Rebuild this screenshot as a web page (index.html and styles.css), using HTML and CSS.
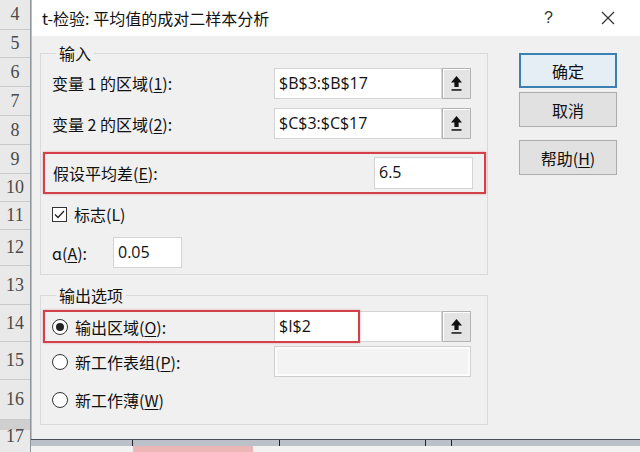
FILE: index.html
```html
<!DOCTYPE html>
<html lang="zh-CN">
<head>
    <meta charset="UTF-8">
    <title>t-检验: 平均值的成对二样本分析</title>
    <link rel="stylesheet" href="styles.css">
</head>
<body>
    <!-- Excel 行号 -->
    <div class="row-heads">
        <div class="rh" style="height:30px">4</div>
        <div class="rh" style="height:28px">5</div>
        <div class="rh" style="height:29px">6</div>
        <div class="rh" style="height:29px">7</div>
        <div class="rh" style="height:29px">8</div>
        <div class="rh" style="height:29px">9</div>
        <div class="rh" style="height:28px">10</div>
        <div class="rh" style="height:28px">11</div>
        <div class="rh" style="height:36px">12</div>
        <div class="rh" style="height:39px">13</div>
        <div class="rh" style="height:37px">14</div>
        <div class="rh" style="height:38px">15</div>
        <div class="rh" style="height:40px">16</div>
        <div class="rh rh-last" style="height:32px">17</div>
    </div>

    <div class="main">
        <div class="dialog">
            <div class="title-bar">
                <span class="title">t-检验: 平均值的成对二样本分析</span>
                <span class="help">?</span>
                <span class="close">
                    <svg width="14" height="14" viewBox="0 0 14 14"><path d="M1 1L13 13M13 1L1 13" stroke="#333" stroke-width="1.2" fill="none"/></svg>
                </span>
            </div>

            <div class="dialog-body">
                <div class="left-col">
                    <fieldset class="group group-in">
                        <legend>输入</legend>

                        <div class="row row-range1">
                            <span class="label">变量 1 的区域(<u>1</u>):</span>
                            <div class="ref-input">
                                <span class="ref-text">$B$3:$B$17</span>
                                <span class="ref-btn">
                                    <svg width="13" height="17" viewBox="0 0 13 17"><path d="M6.5 1L12 7.5H8.6V12H4.4V7.5H1Z" fill="#111"/><rect x="1.5" y="14.2" width="10" height="1.5" fill="#111"/></svg>
                                </span>
                            </div>
                        </div>

                        <div class="row row-range2">
                            <span class="label">变量 2 的区域(<u>2</u>):</span>
                            <div class="ref-input">
                                <span class="ref-text">$C$3:$C$17</span>
                                <span class="ref-btn">
                                    <svg width="13" height="17" viewBox="0 0 13 17"><path d="M6.5 1L12 7.5H8.6V12H4.4V7.5H1Z" fill="#111"/><rect x="1.5" y="14.2" width="10" height="1.5" fill="#111"/></svg>
                                </span>
                            </div>
                        </div>

                        <div class="row mark-row">
                            <span class="label">假设平均差(<u>E</u>):</span>
                            <div class="text-input diff-input">6.5</div>
                        </div>

                        <div class="row check-row">
                            <span class="checkbox">
                                <svg width="13" height="13" viewBox="0 0 13 13"><path d="M2 6.5L5 9.5L11 3" stroke="#222" stroke-width="1.3" fill="none"/></svg>
                            </span>
                            <span class="label">标志(L)</span>
                        </div>

                        <div class="row alpha-row">
                            <span class="label alpha-label">ɑ(<u>A</u>):</span>
                            <div class="text-input alpha-input">0.05</div>
                        </div>
                    </fieldset>

                    <fieldset class="group group-out">
                        <legend>输出选项</legend>

                        <div class="row out-row1">
                            <span class="radio checked"></span>
                            <span class="label out-label">输出区域(<u>O</u>):</span>
                            <div class="ref-input">
                                <span class="ref-text">$I$2</span>
                                <span class="ref-btn">
                                    <svg width="13" height="17" viewBox="0 0 13 17"><path d="M6.5 1L12 7.5H8.6V12H4.4V7.5H1Z" fill="#111"/><rect x="1.5" y="14.2" width="10" height="1.5" fill="#111"/></svg>
                                </span>
                            </div>
                            <div class="mark-box"></div>
                        </div>

                        <div class="row out-row2">
                            <span class="radio"></span>
                            <span class="label out-label">新工作表组(<u>P</u>):</span>
                            <div class="text-input disabled-input"></div>
                        </div>

                        <div class="row out-row3">
                            <span class="radio"></span>
                            <span class="label">新工作薄(<u>W</u>)</span>
                        </div>
                    </fieldset>
                </div>

                <div class="btn-col">
                    <button class="btn btn-default">确定</button>
                    <button class="btn btn-cancel">取消</button>
                    <button class="btn btn-help">帮助(<u>H</u>)</button>
                </div>
            </div>
        </div>

        <!-- 底部工作表标签栏 -->
        <div class="tabs">
            <div class="tab-bar">
                <span class="tick" style="width:101px"></span>
                <span class="tick" style="width:146px"></span>
                <span class="tick" style="width:145px"></span>
                <span class="tick" style="width:25px"></span>
            </div>
            <div class="tab-row">
                <span class="tab-pink"></span>
            </div>
        </div>
    </div>
</body>
</html>
```

FILE: styles.css
```css
body {
    margin: 0;
    width: 640px;
    height: 452px;
    overflow: hidden;
    display: flex;
    font-family: "Noto Sans CJK SC", "Noto Sans", sans-serif;
    font-size: 16px;
    color: #111;
    background-color: #e8e8e8;
}

/* 行号列 */
.row-heads {
    width: 30px;
    flex: none;
    border-right: 1px solid #8f9499;
    background-color: #e9e9e9;
}

.rh {
    box-sizing: border-box;
    display: flex;
    align-items: center;
    justify-content: center;
    border-bottom: 1px solid #c9c9c9;
    font-family: "Liberation Serif", "DejaVu Serif", serif;
    font-size: 18px;
    color: #4a4a4a;
}

.rh-last {
    background: linear-gradient(#cfcfcf 0, #cfcfcf 10px, #e9e9e9 10px);
    border-bottom: none;
}

.main {
    flex: 1;
    display: flex;
    flex-direction: column;
}

/* 对话框 */
.dialog {
    height: 439px;
    box-sizing: border-box;
    background-color: #f0f0f0;
    border-left: 1px solid #b7c0ca;
    display: flex;
    flex-direction: column;
}

.title-bar {
    height: 36px;
    flex: none;
    background-color: #fff;
    display: flex;
    align-items: center;
    padding-left: 10px;
}

.title {
    flex: 1;
    font-size: 16px;
    color: #111;
}

.help {
    font-family: "Liberation Sans", sans-serif;
    font-size: 16px;
    color: #333;
    margin-right: 48px;
}

.close {
    display: flex;
    margin-right: 25px;
}

.dialog-body {
    display: flex;
    padding: 8px 0 0 8px;
}

.left-col {
    width: 448px;
}

.group {
    margin: 0;
    padding: 0 0 0 11px;
    border: 1px solid #dadada;
    min-width: 0;
}

.group legend {
    padding: 0 3px;
    margin-left: 4px;
    line-height: 18px;
    height: 18px;
    font-size: 16px;
}

.group-in {
    padding-bottom: 6px;
}

.group-out {
    margin-top: 11px;
    padding-bottom: 14px;
}

.row {
    display: flex;
    align-items: center;
}

.label {
    white-space: nowrap;
}

u {
    text-decoration-thickness: 1px;
    text-underline-offset: 2px;
}

.row-range1 {
    margin-top: 5px;
    height: 32px;
}

.row-range2 {
    margin-top: 9px;
    height: 31px;
}

.row-range1 .label,
.row-range2 .label {
    width: 222px;
}

/* 引用输入框 */
.ref-input {
    display: flex;
    height: 31px;
}

.ref-text {
    box-sizing: border-box;
    width: 168px;
    background-color: #fff;
    border: 1px solid #d4d4d4;
    padding-left: 4px;
    font-family: "Open Sans", "Noto Sans", sans-serif;
    font-size: 16px;
    line-height: 28px;
    color: #111;
}

.ref-btn {
    box-sizing: border-box;
    width: 29px;
    background-color: #e4e4e4;
    border: 1px solid #b3b3b3;
    box-shadow: inset 1px 1px 0 #fff;
    display: flex;
    align-items: center;
    justify-content: center;
}

.text-input {
    box-sizing: border-box;
    background-color: #fff;
    border: 1px solid #d4d4d4;
    font-family: "Open Sans", "Noto Sans", sans-serif;
    font-size: 16px;
    line-height: 29px;
    padding-left: 4px;
}

/* 红框标注 */
.mark-row {
    margin: 13px 0 0 -9px;
    width: 443px;
    height: 42px;
    box-sizing: border-box;
    border: 2px solid #d2404a;
    box-shadow: 0 0 2px rgba(220, 80, 90, 0.5);
    padding-left: 8px;
}

.mark-row .label {
    flex: 1;
}

.diff-input {
    width: 99px;
    height: 32px;
    margin-right: 11px;
}

.check-row {
    margin-top: 11px;
    height: 18px;
}

.checkbox {
    box-sizing: border-box;
    width: 15px;
    height: 15px;
    border: 1px solid #333;
    background-color: #fff;
    display: flex;
    align-items: center;
    justify-content: center;
    margin-right: 7px;
}

.alpha-row {
    margin-top: 14px;
    height: 31px;
}

.alpha-label {
    width: 61px;
}

.alpha-input {
    width: 69px;
    height: 31px;
}

/* 输出选项 */
.out-row1 {
    margin-top: 7px;
    height: 31px;
    position: relative;
}

.out-row2 {
    margin-top: 4px;
    height: 31px;
}

.out-row3 {
    margin-top: 13px;
    height: 20px;
}

.out-label {
    width: 199px;
}

.radio {
    box-sizing: border-box;
    width: 16px;
    height: 16px;
    border: 1px solid #333;
    border-radius: 50%;
    background-color: #fff;
    margin-right: 7px;
    display: flex;
    align-items: center;
    justify-content: center;
}

.radio.checked::after {
    content: "";
    width: 8px;
    height: 8px;
    border-radius: 50%;
    background-color: #222;
}

.mark-box {
    position: absolute;
    left: -9px;
    top: -1px;
    width: 317px;
    height: 33px;
    box-sizing: border-box;
    border: 2px solid #d2404a;
    box-shadow: 0 0 2px rgba(220, 80, 90, 0.5);
}

.disabled-input {
    width: 197px;
    height: 31px;
    background-color: #f3f3f3;
    border: 1px solid #cfcfcf;
    box-shadow: inset 0 0 0 2px #fcfcfc;
}

/* 按钮 */
.btn-col {
    display: flex;
    flex-direction: column;
    margin-left: 31px;
    padding-top: 9px;
}

.btn {
    width: 98px;
    height: 35px;
    box-sizing: border-box;
    background-color: #e1e1e1;
    border: 1px solid #adadad;
    font-family: "Noto Sans CJK SC", sans-serif;
    font-size: 16px;
    color: #111;
    padding: 0;
}

.btn-default {
    border: 2px solid #3c7fb1;
    background-color: #e5eef5;
}

.btn-cancel {
    margin-top: 4px;
}

.btn-help {
    margin-top: 13px;
}

/* 工作表标签栏 */
.tabs {
    height: 13px;
    display: flex;
    flex-direction: column;
}

.tab-bar {
    height: 6px;
    background-color: #bcc0c8;
    border-top: 1px solid #4a4f57;
    display: flex;
}

.tick {
    border-right: 1px solid #222;
}

.tab-row {
    flex: 1;
    background-color: #f2f2f2;
    padding-left: 102px;
}

.tab-pink {
    display: block;
    width: 120px;
    height: 100%;
    background-color: #eab6b6;
}
```
